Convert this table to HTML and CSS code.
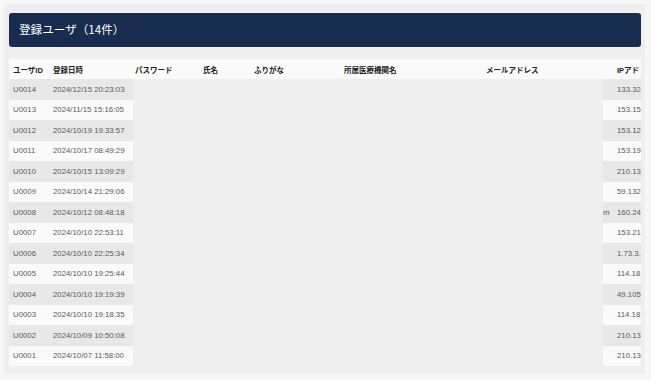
FILE: index.html
```html
<!DOCTYPE html>
<html lang="ja">
<head>
<meta charset="utf-8">
<title>登録ユーザ</title>
<link rel="stylesheet" href="styles.css">
</head>
<body>
<div class="panel">
  <div class="title-bar"><h1 class="title">登録ユーザ（14件）</h1></div>
  <div class="table">
    <div class="thead">
      <div class="th">ユーザID</div>
      <div class="th">登録日時</div>
      <div class="th">パスワード</div>
      <div class="th">氏名</div>
      <div class="th">ふりがな</div>
      <div class="th">所属医療機関名</div>
      <div class="th">メールアドレス</div>
      <div class="th">IPアド</div>
    </div>
    <div class="tr odd"><div class="td">U0014</div><div class="td">2024/12/15 20:23:03</div><div class="gap"></div><div class="td ip">133.32</div></div>
    <div class="tr even"><div class="td">U0013</div><div class="td">2024/11/15 15:16:05</div><div class="gap"></div><div class="td ip">153.15</div></div>
    <div class="tr odd"><div class="td">U0012</div><div class="td">2024/10/19 19:33:57</div><div class="gap"></div><div class="td ip">153.12</div></div>
    <div class="tr even"><div class="td">U0011</div><div class="td">2024/10/17 08:49:29</div><div class="gap"></div><div class="td ip">153.19</div></div>
    <div class="tr odd"><div class="td">U0010</div><div class="td">2024/10/15 13:09:29</div><div class="gap"></div><div class="td ip">210.13</div></div>
    <div class="tr even"><div class="td">U0009</div><div class="td">2024/10/14 21:29:06</div><div class="gap"></div><div class="td ip">59.132</div></div>
    <div class="tr odd"><div class="td">U0008</div><div class="td">2024/10/12 08:48:18</div><div class="gap"></div><div class="td ip"><span class="ovf">m</span>160.24</div></div>
    <div class="tr even"><div class="td">U0007</div><div class="td">2024/10/10 22:53:11</div><div class="gap"></div><div class="td ip">153.21</div></div>
    <div class="tr odd"><div class="td">U0006</div><div class="td">2024/10/10 22:25:34</div><div class="gap"></div><div class="td ip">1.73.3.</div></div>
    <div class="tr even"><div class="td">U0005</div><div class="td">2024/10/10 19:25:44</div><div class="gap"></div><div class="td ip">114.18</div></div>
    <div class="tr odd"><div class="td">U0004</div><div class="td">2024/10/10 19:19:39</div><div class="gap"></div><div class="td ip">49.105</div></div>
    <div class="tr even"><div class="td">U0003</div><div class="td">2024/10/10 19:18:35</div><div class="gap"></div><div class="td ip">114.18</div></div>
    <div class="tr odd"><div class="td">U0002</div><div class="td">2024/10/09 10:50:08</div><div class="gap"></div><div class="td ip">210.13</div></div>
    <div class="tr even"><div class="td">U0001</div><div class="td">2024/10/07 11:58:00</div><div class="gap"></div><div class="td ip">210.13</div></div>
  </div>
</div>
</body>
</html>
```

FILE: styles.css
```css
html, body {
  margin: 0;
  padding: 0;
  background: #f7f7f7;
}
body {
  padding: 4px 4px 6px 4px;
  font-family: "Liberation Sans", "Noto Sans CJK JP", sans-serif;
}
.panel {
  width: 641px;
  box-sizing: border-box;
  background: #efefef;
  padding: 9px 4px 8px 5px;
}
.title-bar {
  height: 34px;
  background: #172c4f;
  border-radius: 3px;
  box-sizing: border-box;
  padding-left: 10px;
  display: flex;
  align-items: center;
}
.title {
  margin: 0;
  font-family: "Noto Sans CJK JP", sans-serif;
  font-weight: 400;
  font-size: 11.6px;
  color: #ffffff;
  line-height: 1;
}
.table {
  margin-top: 12px;
  width: 632px;
}
.thead {
  display: grid;
  grid-template-columns: 40px 82px 68px 51px 90px 142px 131px 28px;
  height: 20px;
  background: #fafafa;
  align-items: center;
}
.th {
  padding-left: 4px;
  font-family: "Liberation Sans", "Noto Sans CJK JP", sans-serif;
  font-weight: 700;
  font-size: 7.5px;
  color: #222;
  white-space: nowrap;
  overflow: hidden;
}
.tr {
  display: grid;
  grid-template-columns: 40px 84px 470px 38px;
  height: 20.5px;
}
.td {
  padding-left: 4px;
  font-size: 7.8px;
  color: #5a5a5a;
  white-space: nowrap;
  overflow: hidden;
  display: flex;
  align-items: center;
}
.odd .td { background: #e8e8e8; }
.even .td { background: #fafafa; }
.gap { background: transparent; }
.td.ip {
  padding-left: 14px;
  position: relative;
}
.ovf {
  position: absolute;
  left: 0;
  top: 0;
  bottom: 0;
  display: flex;
  align-items: center;
}
```
